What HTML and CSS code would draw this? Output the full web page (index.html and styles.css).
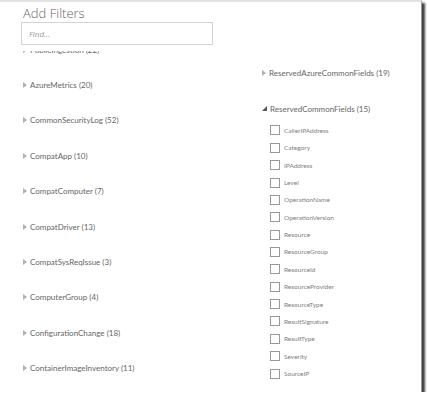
FILE: index.html
```html
<!DOCTYPE html>
<html lang="en">
<head>
    <meta charset="UTF-8">
    <meta name="viewport" content="width=device-width, initial-scale=1.0">
    <title>Add Filters</title>
    <link rel="stylesheet" href="styles.css">
</head>
<body>
    <div class="frame">
        <div class="header">
            <h2 class="title">Add Filters</h2>
            <input class="search" type="text" placeholder="Find...">
        </div>

        <div class="list">
            <div class="col col-left">
                <div class="group"><span class="arrow"></span>PublicIngestion (22)</div>
                <div class="group"><span class="arrow"></span>AzureMetrics (20)</div>
                <div class="group"><span class="arrow"></span>CommonSecurityLog (52)</div>
                <div class="group"><span class="arrow"></span>CompatApp (10)</div>
                <div class="group"><span class="arrow"></span>CompatComputer (7)</div>
                <div class="group"><span class="arrow"></span>CompatDriver (13)</div>
                <div class="group"><span class="arrow"></span>CompatSysReqIssue (3)</div>
                <div class="group"><span class="arrow"></span>ComputerGroup (4)</div>
                <div class="group"><span class="arrow"></span>ConfigurationChange (18)</div>
                <div class="group"><span class="arrow"></span>ContainerImageInventory (11)</div>
            </div>

            <div class="col col-right">
                <div class="group"><span class="arrow"></span>ReservedAzureCommonFields (19)</div>
                <div class="group open">
                    <svg class="arrow-open" width="5" height="5" viewBox="0 0 5 5"><polygon points="5,0 5,5 0,5" fill="#555"/></svg>
                    ReservedCommonFields (15)
                </div>
                <div class="fields">
                    <label class="field"><span class="box"></span>CallerIPAddress</label>
                    <label class="field"><span class="box"></span>Category</label>
                    <label class="field"><span class="box"></span>IPAddress</label>
                    <label class="field"><span class="box"></span>Level</label>
                    <label class="field"><span class="box"></span>OperationName</label>
                    <label class="field"><span class="box"></span>OperationVersion</label>
                    <label class="field"><span class="box"></span>Resource</label>
                    <label class="field"><span class="box"></span>ResourceGroup</label>
                    <label class="field"><span class="box"></span>ResourceId</label>
                    <label class="field"><span class="box"></span>ResourceProvider</label>
                    <label class="field"><span class="box"></span>ResourceType</label>
                    <label class="field"><span class="box"></span>ResultSignature</label>
                    <label class="field"><span class="box"></span>ResultType</label>
                    <label class="field"><span class="box"></span>Severity</label>
                    <label class="field"><span class="box"></span>SourceIP</label>
                </div>
            </div>
        </div>
    </div>
</body>
</html>
```

FILE: styles.css
```css
body { margin: 0; background: #fff; font-family: Lato, "Open Sans", sans-serif; color: #666; }
.frame { width: 421px; height: 390px; border-top: 2px solid #e4e4e4; border-right: 1px solid #999; background: #fff; box-shadow: 3px 3px 2px rgba(0, 0, 0, 0.75); display: flex; flex-direction: column; overflow: hidden; }
.header { padding: 3px 0 0 21px; }
.title { margin: 0 0 0 2px; font-family: "Open Sans", sans-serif; font-weight: 300; font-size: 13px; line-height: 17px; color: #666; }
.search { display: block; box-sizing: border-box; width: 192px; height: 23px; margin: 0; padding: 0 7px; border: 1px solid #d4d4d4; font-family: "Open Sans", sans-serif; font-size: 8px; outline: none; }
.search::placeholder { color: #999; font-style: italic; }
.list { flex: 1; overflow: hidden; display: grid; grid-template-columns: 239px 1fr; padding-left: 23px; margin-top: 6px; }
.col-left { margin-top: -19px; }
.col-right { padding-top: 4px; }
.group { height: 35.4px; display: flex; align-items: center; gap: 3px; font-size: 8px; white-space: nowrap; }
.group.open { height: 36.6px; }
.arrow { width: 0; height: 0; border-left: 4px solid #b0b0b0; border-top: 3px solid transparent; border-bottom: 3px solid transparent; }
.arrow-open { display: block; }
.fields { margin-top: -5.2px; padding-left: 8px; }
.field { height: 17.36px; display: flex; align-items: center; gap: 4px; font-size: 6.5px; color: #808080; }
.box { width: 8px; height: 8px; border: 1px solid #999; background: #fff; }
```
